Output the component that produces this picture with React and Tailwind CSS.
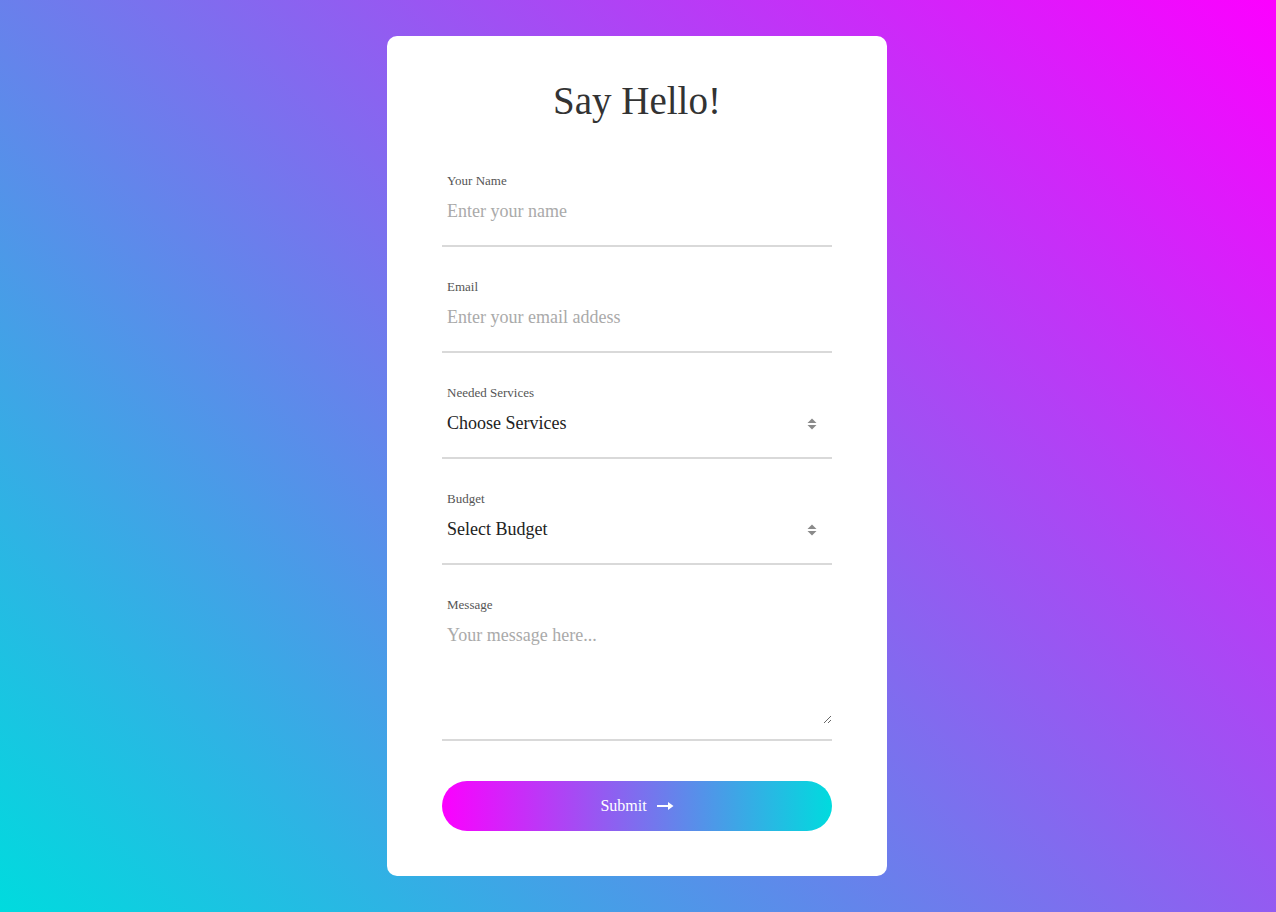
import React from "react";

const serif = { fontFamily: '"Liberation Serif", "Times New Roman", serif' };

function SortIcon() {
  return (
    <svg width="10" height="12" viewBox="0 0 10 12" className="pointer-events-none absolute right-[15px] top-1/2 -translate-y-1/2">
      <path d="M5 0.5 L9.5 5 H0.5 Z" fill="#8a8a8a" />
      <path d="M5 11.5 L9.5 7 H0.5 Z" fill="#8a8a8a" />
    </svg>
  );
}

function Field({ label, children }) {
  return (
    <div className="pt-[32px] pb-[15px] border-b-2 border-[#d9d9d9]">
      <label className="block px-[5px] text-[13px] leading-[15px] text-[#555] mb-[5px]">{label}</label>
      {children}
    </div>
  );
}

export default function App() {
  const inputCls = "block w-full bg-transparent px-[5px] py-[8px] text-[18px] leading-[21px] text-[#222] placeholder:text-[#aaa] outline-none";
  return (
    <div
      className="min-h-screen w-full flex justify-center items-start pt-[36px] pb-[36px] bg-[linear-gradient(45deg,#00dbde,#fc00ff)]"
      style={serif}
    >
      <div className="w-[500px] mr-[2px] bg-white rounded-[10px] px-[55px] pt-[42px] pb-[45px]">
        <h1 className="text-center text-[39px] leading-[46px] text-[#333] mb-[17px]">Say Hello!</h1>
        <form onSubmit={e => e.preventDefault()}>
          <Field label="Your Name">
            <input type="text" placeholder="Enter your name" className={inputCls} style={serif} />
          </Field>
          <Field label="Email">
            <input type="text" placeholder="Enter your email addess" className={inputCls} style={serif} />
          </Field>
          <Field label="Needed Services">
            <div className="relative">
              <select className={inputCls + " appearance-none cursor-pointer"} style={serif} defaultValue="">
                <option value="" disabled>Choose Services</option>
                <option>Web Design</option>
                <option>Development</option>
              </select>
              <SortIcon />
            </div>
          </Field>
          <Field label="Budget">
            <div className="relative">
              <select className={inputCls + " appearance-none cursor-pointer"} style={serif} defaultValue="">
                <option value="" disabled>Select Budget</option>
                <option>$1000 - $5000</option>
                <option>$5000 - $10000</option>
              </select>
              <SortIcon />
            </div>
          </Field>
          <Field label="Message">
            <textarea
              placeholder="Your message here..."
              className={inputCls + " h-[107px] py-[4px] resize-y"}
              style={serif}
            />
          </Field>
          <button
            type="submit"
            className="mt-[40px] w-full h-[50px] rounded-full flex items-center justify-center gap-[10px] text-white text-[16px] bg-[linear-gradient(to_right,#fc00ff,#00dbde)]"
            style={serif}
          >
            <span>Submit</span>
            <svg width="17" height="10" viewBox="0 0 17 10">
              <path d="M0 5 H13" stroke="white" strokeWidth="2" />
              <path d="M11 1 L16.5 5 L11 9 Z" fill="white" />
            </svg>
          </button>
        </form>
      </div>
    </div>
  );
}
